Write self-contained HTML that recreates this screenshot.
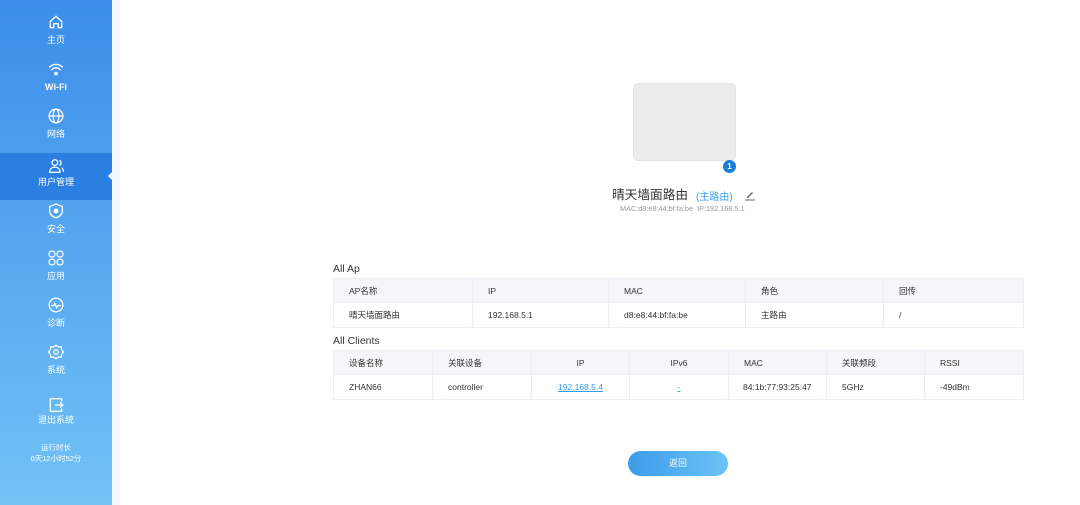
<!DOCTYPE html>
<html><head><meta charset="utf-8"><style>
*{margin:0;padding:0;box-sizing:border-box}
body{width:1080px;height:505px;overflow:hidden;background:#fff;font-family:"Liberation Sans","Noto Sans CJK SC",sans-serif;position:relative;color:#333}
.side{position:absolute;left:0;top:0;width:112px;height:505px;background:linear-gradient(#3b8ee9,#72c2f6)}
.strip{position:absolute;left:112px;top:0;width:8px;height:505px;background:#f3f6fa}
.item{position:absolute;left:0;width:112px;height:47px;color:#fff;text-align:center;font-size:9px}
.item svg{position:absolute;left:48px;top:8px;width:16px;height:16px}
.item span{position:absolute;left:0;right:0;top:28px;line-height:12px}
.act{background:#2a7fe0}
.act:after{content:"";position:absolute;right:0;top:19px;border:4px solid transparent;border-right-color:#fff}
.t{position:absolute;font-size:10.5px;color:#333}
table{position:absolute;border-collapse:collapse;font-size:8.5px;color:#333;table-layout:fixed}
td{border:1px solid #ebeef5;padding:0 0 0 15px;height:25px}
tr.h td{background:#f5f6f8;height:24px}
td.c{text-align:center;padding:0}
a{color:#3a9ce8;text-decoration:underline}
</style></head><body>
<div class="side">
<div class="item" style="top:6px"><svg viewBox="0 0 14 14" fill="none" stroke="#fff" stroke-width="1.2"><path d="M2 6.5L7 2l5 4.5V12H9V8.5H5V12H2z"/></svg><span>主页</span></div>
<div class="item" style="top:53px"><svg viewBox="0 0 14 14" fill="none" stroke="#fff" stroke-width="1.2"><path d="M1 5.5a8.5 8.5 0 0 1 12 0M3 8a5 5 0 0 1 8 0"/><circle cx="7" cy="11" r="1" fill="#fff"/></svg><span style="font-weight:bold">Wi-Fi</span></div>
<div class="item" style="top:100px"><svg viewBox="0 0 14 14" fill="none" stroke="#fff" stroke-width="1.1"><circle cx="7" cy="7" r="6"/><ellipse cx="7" cy="7" rx="2.6" ry="6"/><path d="M1 7h12"/></svg><span>网络</span></div>
<div class="item act" style="top:153px"><svg viewBox="0 0 14 14" fill="none" stroke="#fff" stroke-width="1.1" style="top:5px"><circle cx="6" cy="4" r="2.5"/><path d="M1.5 12.5c0-3 2-4.5 4.5-4.5s4.5 1.5 4.5 4.5zM10 2a2.5 2.5 0 0 1 0 4.5M12 8.5c1 .8 1.5 2 1.5 3.5"/></svg><span style="top:23px">用户管理</span></div>
<div class="item" style="top:195px"><svg viewBox="0 0 14 14" fill="none" stroke="#fff" stroke-width="1.1"><path d="M7 1l5.5 2v4c0 3-2.5 5-5.5 6C4 12 1.5 10 1.5 7V3z"/><circle cx="7" cy="7" r="1.6" fill="#fff"/></svg><span>安全</span></div>
<div class="item" style="top:242px"><svg viewBox="0 0 14 14" fill="none" stroke="#fff" stroke-width="1.1"><rect x="1" y="1" width="5" height="5" rx="2"/><rect x="8" y="1" width="5" height="5" rx="2"/><rect x="1" y="8" width="5" height="5" rx="2"/><rect x="8" y="8" width="5" height="5" rx="2"/></svg><span>应用</span></div>
<div class="item" style="top:289px"><svg viewBox="0 0 14 14" fill="none" stroke="#fff" stroke-width="1.1"><circle cx="7" cy="7" r="6"/><path d="M2.5 7.5h2.5l1-2 1.5 4 1-2H11.5"/></svg><span>诊断</span></div>
<div class="item" style="top:336px"><svg viewBox="0 0 14 14" fill="none" stroke="#fff" stroke-width="1.1"><path d="M7 1l2 1.5 2.5 0 .5 2.5 1.5 2-1.5 2-.5 2.5-2.5 0L7 13l-2-1.5-2.5 0L2 9 .5 7 2 5l.5-2.5 2.5 0z"/><circle cx="7" cy="7" r="2"/></svg><span>系统</span></div>
<div class="item" style="top:389px"><svg viewBox="0 0 14 14" fill="none" stroke="#fff" stroke-width="1.1"><path d="M12 4V1.5H2v11h10V10M6 7h7M10.5 4.5L13 7l-2.5 2.5"/></svg><span style="top:25px">退出系统</span></div>
<div style="position:absolute;top:442px;left:0;width:112px;text-align:center;color:#fff;font-size:7.5px;line-height:11px">运行时长<br>0天12小时52分</div>
</div>
<div class="strip"></div>

<div style="position:absolute;left:633px;top:83px;width:103px;height:78px;background:#ececec;border-radius:5px;border:1px solid #e4e4e4"></div>
<div style="position:absolute;left:723px;top:160px;width:13px;height:13px;border-radius:50%;background:#1a7fd4;color:#fff;font-size:8px;text-align:center;line-height:13px;font-weight:bold">1</div>
<div class="t" style="left:612px;top:184px;font-size:12.7px;color:#333">晴天墙面路由</div>
<div class="t" style="left:696px;top:188px;font-size:10px;color:#3a9ce8">(主路由)</div>
<svg style="position:absolute;left:744px;top:189px" width="12" height="12" viewBox="0 0 12 12"><path d="M3 8L8 3l1 1-5 5H3z" fill="#666"/><path d="M1 11h10" stroke="#666"/></svg>
<div class="t" style="left:620px;top:204px;font-size:7.3px;color:#999;white-space:nowrap">MAC:d8:e8:44:bf:fa:be &nbsp;IP:192.168.5.1</div>

<div class="t" style="left:333px;top:263px">All Ap</div>
<table style="left:333px;top:278px;width:690px">
<colgroup><col style="width:139px"><col style="width:136px"><col style="width:137px"><col style="width:138px"><col style="width:140px"></colgroup>
<tr class="h"><td>AP名称</td><td>IP</td><td>MAC</td><td>角色</td><td>回传</td></tr>
<tr><td>晴天墙面路由</td><td>192.168.5.1</td><td>d8:e8:44:bf:fa:be</td><td>主路由</td><td>/</td></tr>
</table>
<div class="t" style="left:333px;top:335px">All Clients</div>
<table style="left:333px;top:350px;width:690px">
<colgroup><col style="width:99px"><col style="width:99px"><col style="width:98px"><col style="width:99px"><col style="width:98px"><col style="width:98px"><col style="width:99px"></colgroup>
<tr class="h"><td>设备名称</td><td>关联设备</td><td class="c">IP</td><td class="c">IPv6</td><td>MAC</td><td>关联频段</td><td>RSSI</td></tr>
<tr><td>ZHAN66</td><td>controller</td><td class="c"><a>192.168.5.4</a></td><td class="c"><a>-</a></td><td style="padding-left:14px">84:1b:77:93:25:47</td><td>5GHz</td><td>-49dBm</td></tr>
</table>

<div style="position:absolute;left:628px;top:451px;width:100px;height:25px;border-radius:13px;background:linear-gradient(90deg,#3d9be9,#6cc4f6);color:#fff;font-size:9px;text-align:center;line-height:25px">返回</div>
</body></html>
